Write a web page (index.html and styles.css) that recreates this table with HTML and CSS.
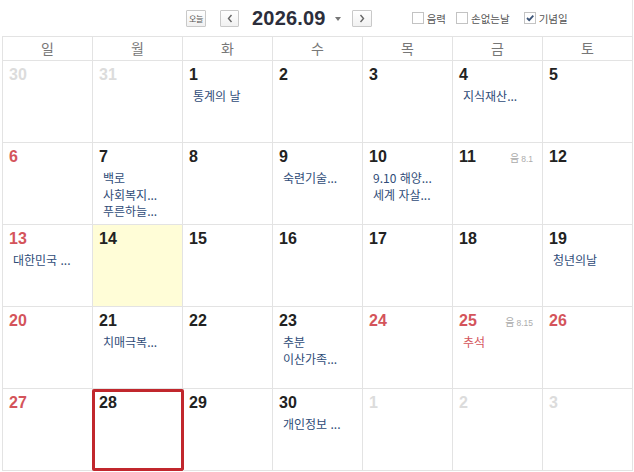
FILE: index.html
```html
<!DOCTYPE html>
<html lang="ko">
<head>
<meta charset="utf-8">
<title>2026.09</title>
<link rel="stylesheet" href="styles.css">
</head>
<body>
<div class="wrap">
  <div class="toolbar">
    <div class="nav">
      <button class="btn btn-today">오늘</button>
      <button class="btn btn-arrow prev"><svg width="6" height="9" viewBox="0 0 6 9"><path d="M4.5 1 L1.5 4.5 L4.5 8" fill="none" stroke="#666" stroke-width="1.4"/></svg></button>
      <span class="title">2026.09</span>
      <span class="caret"></span>
      <button class="btn btn-arrow next"><svg width="6" height="9" viewBox="0 0 6 9"><path d="M1.5 1 L4.5 4.5 L1.5 8" fill="none" stroke="#666" stroke-width="1.4"/></svg></button>
    </div>
    <div class="opts">
      <label class="opt"><span class="box"></span><span>음력</span></label>
      <label class="opt"><span class="box"></span><span>손없는날</span></label>
      <label class="opt"><span class="box checked"><svg width="10" height="10" viewBox="0 0 10 10"><path d="M2 5 L4.2 7.2 L8.3 2.6" fill="none" stroke="#3c5478" stroke-width="1.8"/></svg></span><span>기념일</span></label>
    </div>
  </div>
  <div class="cal">
    <div class="hd">일</div><div class="hd">월</div><div class="hd">화</div><div class="hd">수</div><div class="hd">목</div><div class="hd">금</div><div class="hd">토</div>

    <div class="cell other"><div class="top"><span class="num">30</span></div></div>
    <div class="cell other"><div class="top"><span class="num">31</span></div></div>
    <div class="cell"><div class="top"><span class="num">1</span></div><div class="ev">통계의 날</div></div>
    <div class="cell"><div class="top"><span class="num">2</span></div></div>
    <div class="cell"><div class="top"><span class="num">3</span></div></div>
    <div class="cell"><div class="top"><span class="num">4</span></div><div class="ev">지식재산...</div></div>
    <div class="cell"><div class="top"><span class="num">5</span></div></div>

    <div class="cell red"><div class="top"><span class="num">6</span></div></div>
    <div class="cell"><div class="top"><span class="num">7</span></div><div class="ev">백로</div><div class="ev">사회복지...</div><div class="ev">푸른하늘...</div></div>
    <div class="cell"><div class="top"><span class="num">8</span></div></div>
    <div class="cell"><div class="top"><span class="num">9</span></div><div class="ev">숙련기술...</div></div>
    <div class="cell"><div class="top"><span class="num">10</span></div><div class="ev">9.10 해양...</div><div class="ev">세계 자살...</div></div>
    <div class="cell"><div class="top"><span class="num">11</span><span class="lunar">음<small>8.1</small></span></div></div>
    <div class="cell"><div class="top"><span class="num">12</span></div></div>

    <div class="cell red"><div class="top"><span class="num">13</span></div><div class="ev">대한민국 ...</div></div>
    <div class="cell today"><div class="top"><span class="num">14</span></div></div>
    <div class="cell"><div class="top"><span class="num">15</span></div></div>
    <div class="cell"><div class="top"><span class="num">16</span></div></div>
    <div class="cell"><div class="top"><span class="num">17</span></div></div>
    <div class="cell"><div class="top"><span class="num">18</span></div></div>
    <div class="cell"><div class="top"><span class="num">19</span></div><div class="ev">청년의날</div></div>

    <div class="cell red"><div class="top"><span class="num">20</span></div></div>
    <div class="cell"><div class="top"><span class="num">21</span></div><div class="ev">치매극복...</div></div>
    <div class="cell"><div class="top"><span class="num">22</span></div></div>
    <div class="cell"><div class="top"><span class="num">23</span></div><div class="ev">추분</div><div class="ev">이산가족...</div></div>
    <div class="cell red"><div class="top"><span class="num">24</span></div></div>
    <div class="cell red"><div class="top"><span class="num">25</span><span class="lunar">음<small>8.15</small></span></div><div class="ev hol">추석</div></div>
    <div class="cell red"><div class="top"><span class="num">26</span></div></div>

    <div class="cell red"><div class="top"><span class="num">27</span></div></div>
    <div class="cell selected"><div class="top"><span class="num">28</span></div><span class="sel-box"></span></div>
    <div class="cell"><div class="top"><span class="num">29</span></div></div>
    <div class="cell"><div class="top"><span class="num">30</span></div><div class="ev">개인정보 ...</div></div>
    <div class="cell other"><div class="top"><span class="num">1</span></div></div>
    <div class="cell other"><div class="top"><span class="num">2</span></div></div>
    <div class="cell other"><div class="top"><span class="num">3</span></div></div>
  </div>
</div>
</body>
</html>
```
FILE: styles.css
```css
* { box-sizing: border-box; }
html, body { margin: 0; padding: 0; background: #fff; }
body {
  font-family: "Liberation Sans", "Noto Sans CJK KR", sans-serif;
  color: #222;
}
.wrap {
  margin-left: 2px;
  width: 631px;
}
.toolbar {
  height: 36px;
  display: flex;
  align-items: center;
  padding-left: 184px;
  border-right: 1px solid #e6e6e6;
}
.nav {
  display: flex;
  align-items: center;
}
.btn {
  margin: 0;
  padding: 0;
  height: 17px;
  border: 1px solid #c9c9c9;
  border-radius: 1px;
  background: linear-gradient(#fff, #f1f1f1);
  display: flex;
  align-items: center;
  justify-content: center;
  font-family: "Noto Sans CJK KR", sans-serif;
  color: #555;
}
.btn-today {
  width: 20px;
  font-size: 8px;
  letter-spacing: -0.4px;
  margin-right: 14px;
}
.btn-arrow { width: 19px; }
.title {
  margin-left: 13px;
  font-family: "Liberation Sans", sans-serif;
  font-weight: bold;
  font-size: 20px;
  line-height: 20px;
  color: #2c2e3b;
  letter-spacing: 0.2px;
}
.caret {
  margin-left: 9px;
  width: 0;
  height: 0;
  border-left: 3.5px solid transparent;
  border-right: 3.5px solid transparent;
  border-top: 4px solid #777;
  margin-top: 1px;
}
.next { margin-left: 11px; width: 20px; }
.opts {
  display: flex;
  align-items: center;
  margin-left: 40px;
  gap: 10px;
}
.opt {
  display: flex;
  align-items: center;
  gap: 3px;
  font-family: "Noto Sans CJK KR", sans-serif;
  font-size: 10.5px;
  color: #555;
}
.opt:last-child { margin-left: 4px; }
.box {
  width: 12px;
  height: 12px;
  border: 1px solid #c3c3c3;
  background: #fff;
  display: flex;
  align-items: center;
  justify-content: center;
}
.cal {
  display: grid;
  grid-template-columns: repeat(7, 90px);
  grid-template-rows: 24px repeat(5, 82px);
  border-left: 1px solid #e3e3e3;
  border-top: 1px solid #e3e3e3;
}
.hd {
  border-right: 1px solid #e3e3e3;
  border-bottom: 1px solid #e3e3e3;
  text-align: center;
  font-family: "Noto Sans CJK KR", sans-serif;
  font-size: 14px;
  line-height: 22px;
  color: #777;
}
.cell {
  position: relative;
  border-right: 1px solid #e3e3e3;
  border-bottom: 1px solid #e3e3e3;
  padding: 4px 9px 0 6px;
}
.top {
  display: flex;
  align-items: center;
  justify-content: space-between;
  height: 20px;
  margin-bottom: 3px;
}
.num {
  font-family: "Liberation Sans", sans-serif;
  font-weight: bold;
  font-size: 16px;
  line-height: 20px;
  color: #222;
}
.red .num { color: #d4545b; }
.other .num { color: #dcdcdc; }
.today { background: #fffdd7; }
.lunar {
  font-family: "Noto Sans CJK KR", sans-serif;
  font-size: 10px;
  color: #acacac;
  margin-top: 1px;
}
.lunar small {
  font-family: "Liberation Sans", sans-serif;
  font-size: 8.5px;
  margin-left: 2px;
}
.ev {
  margin-left: 4px;
  font-family: "Noto Sans CJK KR", sans-serif;
  font-size: 12px;
  line-height: 16.5px;
  color: #2f4c78;
  white-space: nowrap;
}
.ev.hol { color: #d4545b; }
.sel-box {
  position: absolute;
  left: -1px;
  top: 0;
  width: 92px;
  height: 82px;
  border: 3px solid #c1272d;
  border-radius: 2px;
}
```
